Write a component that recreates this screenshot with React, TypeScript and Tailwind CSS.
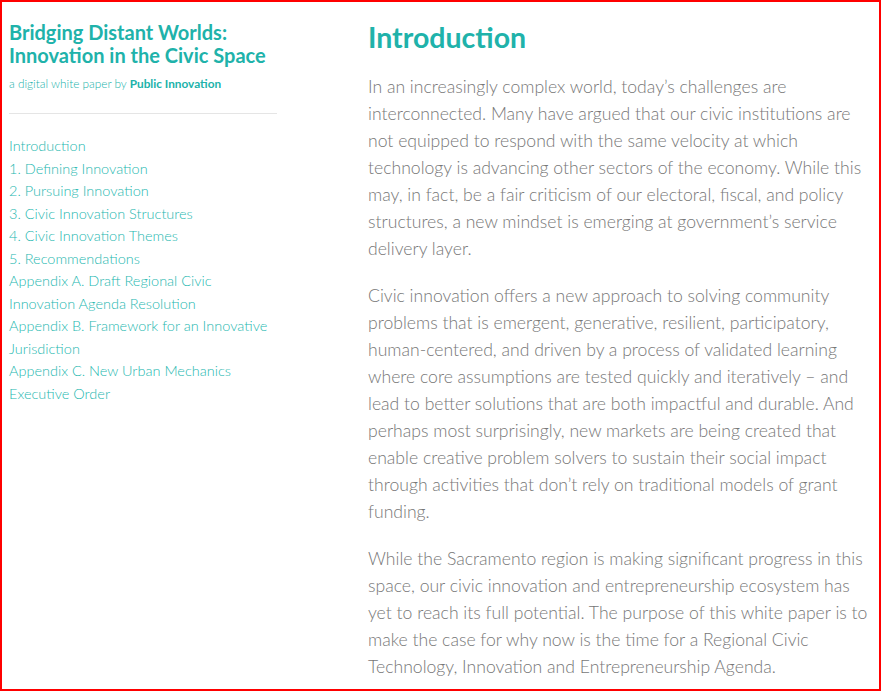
import React from "react";

const nav = [
  "Introduction",
  "1. Defining Innovation",
  "2. Pursuing Innovation",
  "3. Civic Innovation Structures",
  "4. Civic Innovation Themes",
  "5. Recommendations",
  "Appendix A. Draft Regional Civic Innovation Agenda Resolution",
  "Appendix B. Framework for an Innovative Jurisdiction",
  "Appendix C. New Urban Mechanics Executive Order",
];

export default function App() {
  return (
    <div
      className="w-[881px] h-[691px] border-2 border-[#ff0000] bg-white overflow-hidden flex"
      style={{ fontFamily: "Lato, 'Open Sans', sans-serif" }}
    >
      <aside className="w-[268px] ml-[7px] shrink-0 pt-[19px]">
        <h1 className="text-[20px] leading-[23px] font-bold text-[#20b2aa]">
          Bridging Distant Worlds: Innovation in the Civic Space
        </h1>
        <p className="mt-[10px] text-[11.8px] leading-[14px] font-light text-[#20b2aa]">
          a digital white paper by <span className="font-bold">Public Innovation</span>
        </p>
        <hr className="mt-[22px] border-0 border-t border-[#e5e5e5]" />
        <ul className="mt-[21px] text-[14.5px] leading-[22.5px] font-light text-[#26b8b0]">
          {nav.map((n) => (
            <li key={n}>{n}</li>
          ))}
        </ul>
      </aside>
      <main className="ml-[91px] w-[502px] pt-[16px]">
        <h2 className="text-[28.5px] leading-[38px] font-bold text-[#20b2aa]">Introduction</h2>
        <div className="mt-[17px] text-[17.6px] leading-[27px] font-light text-[#777777] flex flex-col gap-[20px]">
          <p>
            In an increasingly complex world, today’s challenges are interconnected. Many have argued that our civic
            institutions are not equipped to respond with the same velocity at which technology is advancing other
            sectors of the economy. While this may, in fact, be a fair criticism of our electoral, fiscal, and policy
            structures, a new mindset is emerging at government’s service delivery layer.
          </p>
          <p>
            Civic innovation offers a new approach to solving community problems that is emergent, generative,
            resilient, participatory, human-centered, and driven by a process of validated learning where core
            assumptions are tested quickly and iteratively – and lead to better solutions that are both impactful and
            durable. And perhaps most surprisingly, new markets are being created that enable creative problem solvers
            to sustain their social impact through activities that don’t rely on traditional models of grant funding.
          </p>
          <p>
            While the Sacramento region is making significant progress in this space, our civic innovation and
            entrepreneurship ecosystem has yet to reach its full potential. The purpose of this white paper is to make
            the case for why now is the time for a Regional Civic Technology, Innovation and Entrepreneurship Agenda.
          </p>
        </div>
      </main>
    </div>
  );
}
